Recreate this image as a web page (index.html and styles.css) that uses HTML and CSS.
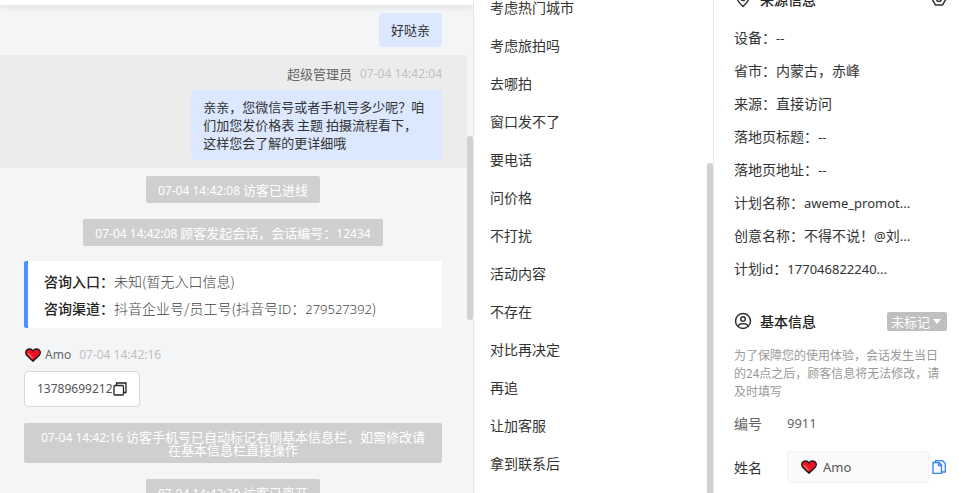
FILE: index.html
```html
<!DOCTYPE html>
<html lang="zh-CN">
<head>
<meta charset="utf-8">
<title>会话</title>
<link rel="stylesheet" href="styles.css">
</head>
<body>
<svg class="defs" aria-hidden="true">
  <symbol id="heart" viewBox="0 0 16 14">
    <path d="M8 13.200 L1.500 7 C-.2 4.800 1 .8 4.200 .8 C6 .8 7.200 1.600 8 2.800 C8.800 1.600 10 .8 11.800 .8 C15 .8 16.200 4.800 14.500 7 Z" fill="#e81224" stroke="#111" stroke-width="1.200" stroke-linejoin="round"/>
    <path d="M3 5.200 L7.500 10" fill="none" stroke="#f4705c" stroke-width="1.500"/>
  </symbol>
</svg>
<div class="app">
  <main class="chat">
    <div class="chat-head"></div>
    <div class="messages">
      <div class="message own"><p class="bubble">好哒亲</p></div>
      <div class="message own active">
        <p class="meta"><span>超级管理员</span><time class="latin">07-04 14:42:04</time></p>
        <p class="bubble">亲亲，您微信号或者手机号多少呢？咱们加您发价格表 主题 拍摄流程看下，这样您会了解的更详细哦</p>
      </div>
      <p class="notice"><span class="latin">07-04 14:42:08</span> 访客已进线</p>
      <p class="notice"><span class="latin">07-04 14:42:08</span> 顾客发起会话，会话编号：<span class="latin">12434</span></p>
      <dl class="entry">
        <div><dt>咨询入口：</dt><dd>未知(暂无入口信息)</dd></div>
        <div><dt>咨询渠道：</dt><dd>抖音企业号/员工号(抖音号<span class="latin">ID</span>：<span class="latin">279527392</span>)</dd></div>
      </dl>
      <div class="message">
        <p class="meta latin"><svg class="heart"><use href="#heart"/></svg><span>Amo</span><time>07-04 14:42:16</time></p>
        <p class="bubble visitor latin">13789699212<button class="icon-button" type="button" aria-label="复制"><svg class="copy" viewBox="0 0 14 14" fill="none" stroke="#222" stroke-width="1.3"><rect x="1" y="3.5" width="9.5" height="9.5" rx="1"/><path d="M3.5 3.3V1h9.5v9.5h-2.2"/></svg></button></p>
      </div>
      <p class="notice"><span class="latin">07-04 14:42:16</span> 访客手机号已自动标记右侧基本信息栏，如需修改请在基本信息栏直接操作</p>
      <p class="notice"><span class="latin">07-04 14:42:20</span> 访客已离开</p>
    </div>
    <span class="thumb chat-thumb"></span>
  </main>
  <nav class="phrases">
    <ul>
      <li>考虑热门城市</li>
      <li>考虑旅拍吗</li>
      <li>去哪拍</li>
      <li>窗口发不了</li>
      <li>要电话</li>
      <li>问价格</li>
      <li>不打扰</li>
      <li>活动内容</li>
      <li>不存在</li>
      <li>对比再决定</li>
      <li>再追</li>
      <li>让加客服</li>
      <li>拿到联系后</li>
    </ul>
    <span class="thumb phrases-thumb"></span>
  </nav>
  <aside class="details">
    <section class="source">
      <header class="section-head">
        <svg class="head-icon" viewBox="0 0 18 18" fill="none" stroke="#333" stroke-width="1.5"><path d="M9 16.500C5.500 13.300 3 10.500 3 7.500a6 6 0 0 1 12 0c0 3-2.500 5.800-6 9z"/><circle cx="9" cy="8.500" r="2"/></svg>
        <h2>来源信息</h2>
        <button class="icon-button push" type="button" aria-label="设置"><svg class="gear" viewBox="0 0 16 16" fill="none" stroke="#333" stroke-width="1.500"><path d="M4.500 2h7L15 8l-3.500 6h-7L1 8z"/><circle cx="8" cy="8" r="2.500"/></svg></button>
      </header>
      <ul>
        <li>设备：<span class="latin">--</span></li>
        <li>省市：内蒙古，赤峰</li>
        <li>来源：直接访问</li>
        <li>落地页标题：<span class="latin">--</span></li>
        <li>落地页地址：<span class="latin">--</span></li>
        <li>计划名称：<span class="latin">aweme_promot...</span></li>
        <li>创意名称：不得不说！<span class="latin">@</span>刘<span class="latin">...</span></li>
        <li>计划<span class="latin">id</span>：<span class="latin">177046822240...</span></li>
      </ul>
    </section>
    <section class="basic">
      <header class="section-head">
        <svg class="head-icon" viewBox="0 0 18 18" fill="none" stroke="#333" stroke-width="1.5"><circle cx="9" cy="9" r="7.500"/><circle cx="9" cy="7" r="2.300"/><path d="M4 14.200c.6-1.700 1.500-2.400 3-2.400h4c1.500 0 2.400.7 3 2.400"/></svg>
        <h2>基本信息</h2>
        <button class="mark push" type="button">未标记<i class="caret"></i></button>
      </header>
      <p class="hint">为了保障您的使用体验，会话发生当日的24点之后，顾客信息将无法修改，请及时填写</p>
      <div class="row muted"><span class="label">编号</span><span class="latin">9911</span></div>
      <div class="row name-row">
        <label class="label" for="name">姓名</label>
        <span class="field"><svg class="heart"><use href="#heart"/></svg><input id="name" class="latin" type="text" value="Amo"></span>
        <button class="icon-button tinted" type="button" aria-label="复制姓名"><svg class="copy" viewBox="0 0 14 14" fill="none" stroke="#3b82f6" stroke-width="1.300"><path d="M1 2.500h6L9.500 5v8.300H1z"/><path d="M6.500 2.500v3h3M3.500 2.300V.7H10.500L13.300 3.500V12H9.700"/></svg></button>
      </div>
    </section>
  </aside>
</div>
</body>
</html>
```
FILE: styles.css
```css
* { box-sizing: border-box; }
body, p, h2, ul, dl, dd { margin: 0; padding: 0; }
ul { list-style: none; }
button, input { font: inherit; color: inherit; border: 0; background: none; padding: 0; }
svg { display: block; flex: none; }

body {
  font-family: "Noto Sans CJK SC", "Noto Sans", sans-serif;
  font-size: 14px;
  color: #333;
  background: #fff;
  overflow: hidden;
}
.defs { position: absolute; width: 0; height: 0; }
.app { display: flex; height: 100vh; }

/* Latin glyphs are set one step smaller than the Chinese around them */
.latin { font-family: "Noto Sans", sans-serif; font-size: 13px; }
.chat .latin { font-size: 12px; }
.chat .entry .latin { font-size: 13px; }
/* Keep the second font from stretching the line box */
.notice .latin, .entry .latin, .source .latin { line-height: 0; }

.thumb { position: absolute; right: 0; width: 6px; border-radius: 3px; background: #d2d2d2; }

/* Chat */
.chat { position: relative; flex: 1; min-width: 0; overflow: hidden; background: #f3f5f7; font-size: 13px; }
.chat-head { position: relative; height: 5px; background: #fff; box-shadow: 0 2px 6px rgba(0, 0, 0, .1); }
.chat-thumb { top: 136px; height: 184px; }
.messages { display: flex; flex-direction: column; margin-right: 6px; padding-top: 8px; }
.message { display: flex; flex-direction: column; align-items: flex-start; padding: 0 25px 0 24px; line-height: 18px; }
.message.own { align-items: flex-end; }
.message.active { margin: 8px 0; padding-top: 10px; padding-bottom: 8px; background: #ececec; }
.meta { display: flex; align-items: center; margin-bottom: 7px; color: #666; }
.meta time { margin-left: 8px; color: #bfbfbf; }
.meta .heart { margin-right: 4px; margin-left: 1px; }
.heart { width: 16px; height: 14px; }
.bubble { max-width: 60%; padding: 8px 12px; border-radius: 4px; background: #dce8ff; }
.visitor { display: flex; align-items: center; border: 1px solid #d9d9d9; background: #fff; color: #555; }
.notice {
  align-self: center;
  margin: 0 25px 16px 24px;
  padding: 7px 12px;
  border-radius: 2px;
  background: #cfcfcf;
  color: #fff;
  line-height: 13px;
  text-align: center;
}
.entry { margin: 0 25px 18px 24px; padding: 7px 16px 6px; border-left: 4px solid #4d8fff; border-radius: 2px; background: #fff; font-size: 14px; line-height: 27px; }
.entry div { display: flex; }
.entry dt { font-weight: 500; color: #222; }
.entry dd { font-weight: 300; color: #444; }
.notice + .entry { margin-top: -1px; }
.message + .notice { margin-top: 16px; }
.message.active + .notice { margin-top: 0; }

.icon-button { display: block; cursor: pointer; }
.copy { width: 14px; height: 14px; }

/* Phrases */
.phrases { position: relative; flex: none; width: 240px; border: solid #e8e8e8; border-width: 0 0 0 1px; overflow: hidden; }
.phrases ul { margin-top: -12px; }
.phrases li { padding-left: 16px; line-height: 38px; }
.phrases-thumb { top: 163px; bottom: -3px; }

/* Details */
.details { flex: none; width: 246px; padding: 0 12px 0 20px; border-left: 1px solid #e8e8e8; overflow: hidden; }
.section-head { display: flex; align-items: center; height: 20px; }
.section-head h2 { margin-left: 8px; font-size: 14px; font-weight: 500; line-height: 20px; color: #222; }
.head-icon { width: 18px; height: 18px; }
.gear { width: 16px; height: 16px; }
.push { margin-left: auto; }
.source { margin-top: -11px; }
.source ul { padding: 12px 0 26px; }
.source li { line-height: 33px; }
.mark { display: flex; align-items: center; gap: 3px; height: 19px; padding: 0 6px 0 4px; border-radius: 2px; background: #bfbfbf; color: #fff; font-size: 13px; }
.caret { border: 4px solid transparent; border-top: 5px solid #fff; border-bottom: 0; }
.hint { margin-top: 15px; font-size: 12px; line-height: 18px; color: #999; }
.row { display: flex; align-items: center; height: 32px; }
.row.muted { margin-top: 7px; color: #666; }
.name-row { margin-top: 12px; }
.label { width: 53px; flex: none; }
.field { display: flex; align-items: center; flex: 1; min-width: 0; gap: 6px; height: 32px; padding: 0 13px; border: 1px solid #f3f3f3; border-radius: 2px; background: #fafafa; }
.field input { flex: 1; min-width: 0; color: #555; }
.tinted { margin: 0 1px 0 3px; background: #f7f9fc; }
```
